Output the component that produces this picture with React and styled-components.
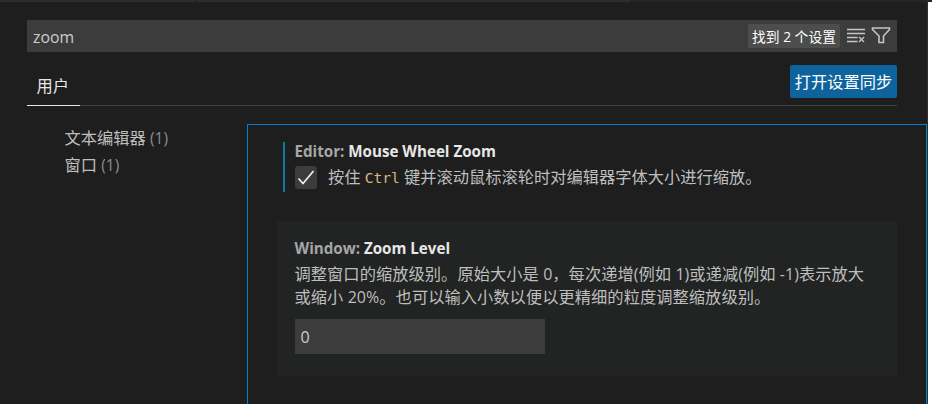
import React from 'react';
import styled, { createGlobalStyle } from 'styled-components';

const Global = createGlobalStyle`
  * { box-sizing: border-box; }
  body { margin: 0; background: #1e1e1e; overflow: hidden; }
`;
const Window = styled.div`
  display: flex;
  width: 932px;
  height: 404px;
  background: #1e1e1e;
  color: #bebebe;
  font: 16.25px/23px "Open Sans", "Noto Sans CJK SC", sans-serif;
  white-space: nowrap;
`;
const Editor = styled.main`
  width: 927px;
  display: flex;
  flex-direction: column;
`;
const Edge = styled.div`
  width: 5px;
  border-left: 1px solid #303031;
  background: #fff;
  border-top: 2px solid #252526;
`;
const TabStrip = styled.div`
  display: flex;
  height: 2px;
  gap: 1px;
`;
const Tab = styled.div`
  width: ${(p) => p.$width}px;
  background: ${(p) => (p.$active ? '#252526' : '#2d2d2d')};
`;
const SearchBar = styled.div`
  display: flex;
  align-items: center;
  height: 32px;
  margin: 18px 30px 0 27px;
  padding: 0 6px;
  background: #3c3c3c;
  color: #cccccc;
`;
const Query = styled.div`
  flex: 1;
  padding-top: 2px;
  font-size: 15.8px;
`;
const Count = styled.div`
  width: 92px;
  height: 24px;
  margin-right: 6px;
  border-radius: 2px;
  background: #4d4d4d;
  color: #fff;
  text-align: center;
  font-size: 13.8px;
  line-height: 25px;
`;
const Icon = styled.svg`
  width: 20px;
  height: 20px;
  margin-right: ${(p) => p.$gap || 0}px;
  margin-top: -2px;
  fill: none;
  stroke: #c5c5c5;
`;
const Header = styled.header`
  display: flex;
  justify-content: space-between;
  height: 54px;
  margin: 0 30px 0 27px;
  border-bottom: 1px solid #404040;
`;
const ScopeTab = styled.div`
  width: 53px;
  height: 54px;
  padding: 23px 0 0 9.5px;
  color: #e7e7e7;
  border-bottom: 1px solid #e7e7e7;
`;
const SyncButton = styled.div`
  width: 107px;
  height: 33px;
  margin-top: 13px;
  border-radius: 2px;
  background: #0e639c;
  color: #fff;
  text-align: center;
  line-height: 35px;
`;
const Body = styled.div`
  display: flex;
  flex: 1;
  margin-top: 18px;
`;
const Toc = styled.nav`
  width: 247px;
  padding: 1px 0 0 64.5px;
  line-height: 27.5px;
`;
const TocItem = styled.div`
  height: 27px;
`;
const Hits = styled.span`
  color: #8c8c8c;
  font-size: 15.5px;
`;
const Settings = styled.section`
  flex: 1;
  border: 1px solid #007fd4;
  border-bottom: 0;
  padding: 17px 29px 0;
`;
const Setting = styled.article`
  height: 155px;
  padding: 18px 0 0 18px;
  background: #222423;
`;
const ModifiedSetting = styled.article`
  height: 50px;
  margin: 0 0 29px 6px;
  padding-left: 10px;
  border-left: 2px solid #0c7d9d;
`;
const Title = styled.h3`
  margin: 0 0 0 -0.5px;
  height: ${(p) => p.$height}px;
  font-size: 15.2px;
  font-weight: 700;
  letter-spacing: -0.02px;
  line-height: 19px;
  color: #a6a6a6;
`;
const Name = styled.span`
  color: #e7e7e7;
`;
const CheckRow = styled.div`
  display: flex;
  align-items: center;
  height: 25px;
`;
const Checkbox = styled.div`
  width: 22px;
  height: 23px;
  margin-right: 11px;
  border-radius: 3px;
  background: #3c3c3c;
`;
const Check = styled.svg`
  display: block;
  width: 22px;
  height: 23px;
  fill: none;
  stroke: #f0f0f0;
  stroke-width: 1.7;
`;
const Code = styled.code`
  font: 14.6px "DejaVu Sans Mono", monospace;
  color: #d7ba7d;
`;
const Line = styled.div`
  height: 23px;
  margin-left: -0.5px;
  letter-spacing: 0.04px;
`;
const Latin = styled.span`
  font-size: 16px;
`;
const NumberField = styled.div`
  width: 250px;
  height: 35px;
  margin-top: 10px;
  padding: 0 5.5px;
  background: #3c3c3c;
  color: #cccccc;
  font-size: 16px;
  line-height: 37px;
`;

export default function App() {
  return (
    <Window>
      <Global />
      <Editor>
        <TabStrip>
          <Tab $width={195} />
          <Tab $width={435} />
          <Tab $width={149} $active />
          <Tab $width={145} $active />
        </TabStrip>
        <SearchBar>
          <Query>zoom</Query>
          <Count>找到 2 个设置</Count>
          <Icon viewBox="0 0 20 20" $gap={5} strokeWidth="1.4">
            <path d="M1 4.5H19M1 8.5H19M1 12.5H11.5M1 16.5H11.5M13 12l5 5M18 12l-5 5" />
          </Icon>
          <Icon viewBox="0 0 20 20" strokeWidth="1.6">
            <path d="M1.5 3H18.5V4.5L12.5 11V17.5H8V11L1.5 4.5Z" />
          </Icon>
        </SearchBar>
        <Header>
          <ScopeTab>用户</ScopeTab>
          <SyncButton>打开设置同步</SyncButton>
        </Header>
        <Body>
          <Toc>
            <TocItem>文本编辑器 <Hits>(1)</Hits></TocItem>
            <TocItem>窗口 <Hits>(1)</Hits></TocItem>
          </Toc>
          <Settings>
            <ModifiedSetting>
              <Title $height={23}>Editor: <Name>Mouse Wheel Zoom</Name></Title>
              <CheckRow>
                <Checkbox>
                  <Check viewBox="0 0 22 23"><path d="M3.5 12.5L8 17.5L18.5 5" /></Check>
                </Checkbox>
                <span>按住 <Code>Ctrl</Code> 键并滚动鼠标滚轮时对编辑器字体大小进行缩放。</span>
              </CheckRow>
            </ModifiedSetting>
            <Setting>
              <Title $height={24}>Window: <Name>Zoom Level</Name></Title>
              <Line>调整窗口的缩放级别。原始大小是 <Latin>0</Latin>，每次递增<Latin>(</Latin>例如 <Latin>1)</Latin>或递减<Latin>(</Latin>例如 <Latin>-1)</Latin>表示放大</Line>
              <Line>或缩小 <Latin>20%</Latin>。也可以输入小数以便以更精细的粒度调整缩放级别。</Line>
              <NumberField>0</NumberField>
            </Setting>
          </Settings>
        </Body>
      </Editor>
      <Edge />
    </Window>
  );
}
